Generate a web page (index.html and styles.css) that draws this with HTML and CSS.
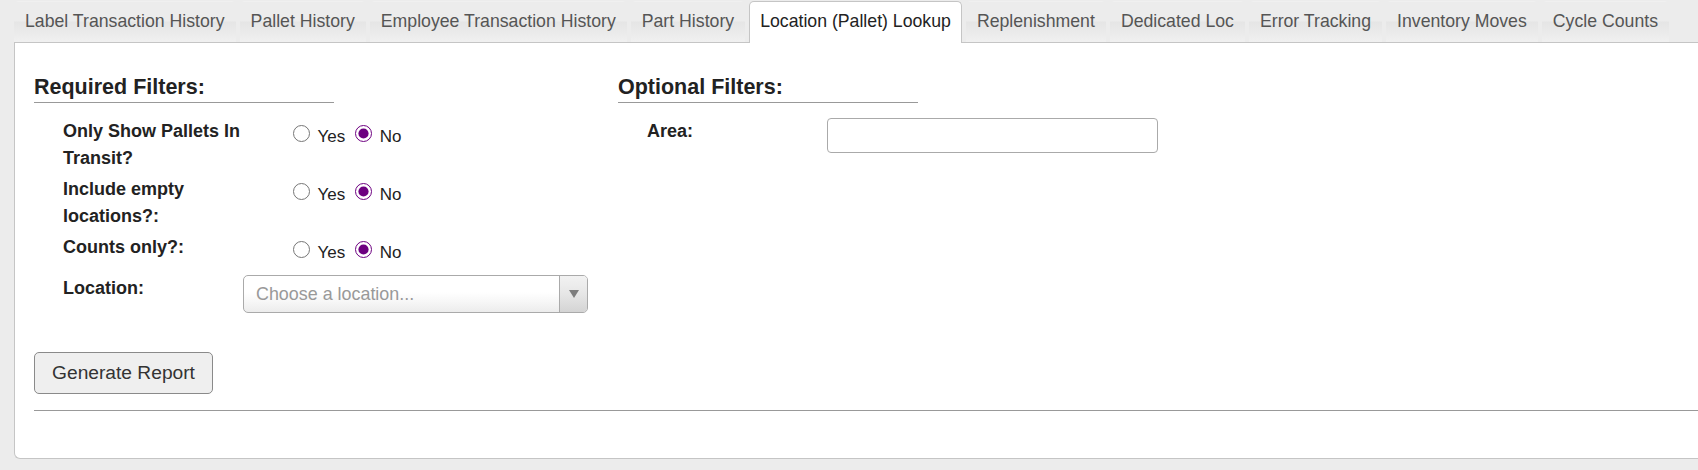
FILE: index.html
```
<!DOCTYPE html>
<html lang="en">
<head>
<meta charset="utf-8">
<title>Location (Pallet) Lookup</title>
<link rel="stylesheet" href="styles.css">
</head>
<body>
<div class="tabs-wrap">
  <ul class="tabs">
    <li class="tab">Label Transaction History</li>
    <li class="tab">Pallet History</li>
    <li class="tab">Employee Transaction History</li>
    <li class="tab">Part History</li>
    <li class="tab tab-active">Location (Pallet) Lookup</li>
    <li class="tab">Replenishment</li>
    <li class="tab">Dedicated Loc</li>
    <li class="tab">Error Tracking</li>
    <li class="tab">Inventory Moves</li>
    <li class="tab">Cycle Counts</li>
  </ul>
  <div class="panel">
    <div class="filters">
      <section class="filter-group filter-required">
        <h2 class="group-title">Required Filters:</h2>
        <div class="field-list">
          <div class="field">
            <div class="field-label">Only Show Pallets In Transit?</div>
            <div class="field-value radios">
              <input type="radio" name="transit" id="transit-yes"> <label for="transit-yes">Yes</label>
              <input type="radio" name="transit" id="transit-no" checked> <label for="transit-no">No</label>
            </div>
          </div>
          <div class="field">
            <div class="field-label">Include empty locations?:</div>
            <div class="field-value radios">
              <input type="radio" name="empty" id="empty-yes"> <label for="empty-yes">Yes</label>
              <input type="radio" name="empty" id="empty-no" checked> <label for="empty-no">No</label>
            </div>
          </div>
          <div class="field">
            <div class="field-label">Counts only?:</div>
            <div class="field-value radios">
              <input type="radio" name="counts" id="counts-yes"> <label for="counts-yes">Yes</label>
              <input type="radio" name="counts" id="counts-no" checked> <label for="counts-no">No</label>
            </div>
          </div>
          <div class="field field-location">
            <div class="field-label">Location:</div>
            <div class="field-value">
              <div class="chosen">
                <span class="chosen-text">Choose a location...</span>
                <span class="chosen-arrow"><span class="chosen-caret"></span></span>
              </div>
            </div>
          </div>
        </div>
      </section>
      <section class="filter-group filter-optional">
        <h2 class="group-title">Optional Filters:</h2>
        <div class="field-list">
          <div class="field">
            <div class="field-label">Area:</div>
            <div class="field-value">
              <input type="text" class="text-input">
            </div>
          </div>
        </div>
      </section>
    </div>
    <button class="btn" type="button">Generate Report</button>
    <hr class="divider">
  </div>
</div>
</body>
</html>
```
FILE: styles.css
```
html, body {
  margin: 0;
  padding: 0;
  background: #ececec;
  overflow: hidden;
}

body {
  font-family: "Liberation Sans", Arial, sans-serif;
  color: #222;
}

.tabs-wrap {
  padding: 1px 0 12px 14px;
}

.tabs {
  display: flex;
  align-items: flex-start;
  list-style: none;
  margin: 0 0 -1px 0;
  padding: 0;
  height: 42px;
  position: relative;
  z-index: 1;
}

.tab {
  box-sizing: border-box;
  height: 41px;
  padding: 0 10px;
  margin-right: 4px;
  border: 1px solid transparent;
  border-bottom: 0;
  border-radius: 5px 5px 0 0;
  font-size: 17.7px;
  line-height: 38px;
  color: #555;
  white-space: nowrap;
  background: linear-gradient(to bottom, rgba(0,0,0,0) 0, rgba(0,0,0,0) 19px, #e5e5e5 20px, #f0f0f0 100%);
}

.tab-active {
  height: 42px;
  background: #fff;
  border-color: #c5c5c5;
  color: #222;
}

.panel {
  background: #fff;
  border: 1px solid #c5c5c5;
  border-right: 0;
  border-radius: 0 0 0 6px;
  padding: 32px 0 47px 19px;
}

.filters {
  display: flex;
}

.filter-required {
  flex: 0 0 584px;
}

.filter-optional {
  flex: 1 1 auto;
}

.group-title {
  margin: 0;
  width: 300px;
  font-size: 21.5px;
  line-height: 25px;
  font-weight: bold;
  padding-bottom: 2px;
  border-bottom: 1px solid #999;
  color: #222;
}

.field-list {
  margin-top: 15px;
  padding-left: 29px;
}

.field {
  display: flex;
  align-items: flex-start;
  margin-bottom: 4px;
}

.field-location {
  margin-top: 9px;
}

.field-label {
  flex: 0 0 180px;
  font-size: 18px;
  line-height: 27px;
  font-weight: bold;
  color: #222;
}

.field-value {
  flex: 1 1 auto;
}

.radios {
  padding: 4px 0 0 45px;
  font-size: 17px;
  line-height: 27px;
  color: #222;
}

.radios input {
  width: 17px;
  height: 17px;
  margin: 3px 3px 0 5px;
  vertical-align: baseline;
  accent-color: #6d0080;
}

.chosen {
  box-sizing: border-box;
  width: 345px;
  height: 38px;
  border: 1px solid #aaa;
  border-radius: 5px;
  background: linear-gradient(to bottom, #fff 45%, #f7f7f7 70%, #ececec 100%);
  display: flex;
  align-items: stretch;
  overflow: hidden;
}

.chosen-text {
  flex: 1 1 auto;
  padding-left: 12px;
  font-size: 17.9px;
  line-height: 36px;
  color: #999;
}

.chosen-arrow {
  flex: 0 0 27px;
  border-left: 1px solid #aaa;
  background: linear-gradient(to bottom, #f2f2f2 0, #e6e6e6 50%, #d4d4d4 100%);
  display: flex;
  align-items: center;
  justify-content: center;
}

.chosen-caret {
  width: 0;
  height: 0;
  border-left: 5px solid transparent;
  border-right: 5px solid transparent;
  border-top: 8px solid #7d7d7d;
}

.text-input {
  box-sizing: border-box;
  width: 331px;
  height: 35px;
  margin: 0;
  border: 1px solid #aaa;
  border-radius: 4px;
  background: #fff;
  font-family: inherit;
  font-size: 17px;
}

.btn {
  display: block;
  box-sizing: border-box;
  margin-top: 35px;
  width: 179px;
  height: 42px;
  border: 1px solid #8a8a8a;
  border-radius: 5px;
  background: #efefef;
  color: #333;
  font-family: inherit;
  font-size: 19.2px;
  padding: 0;
}

.divider {
  margin: 16px 0 0 0;
  border: 0;
  border-top: 1px solid #999;
  height: 0;
}
```
